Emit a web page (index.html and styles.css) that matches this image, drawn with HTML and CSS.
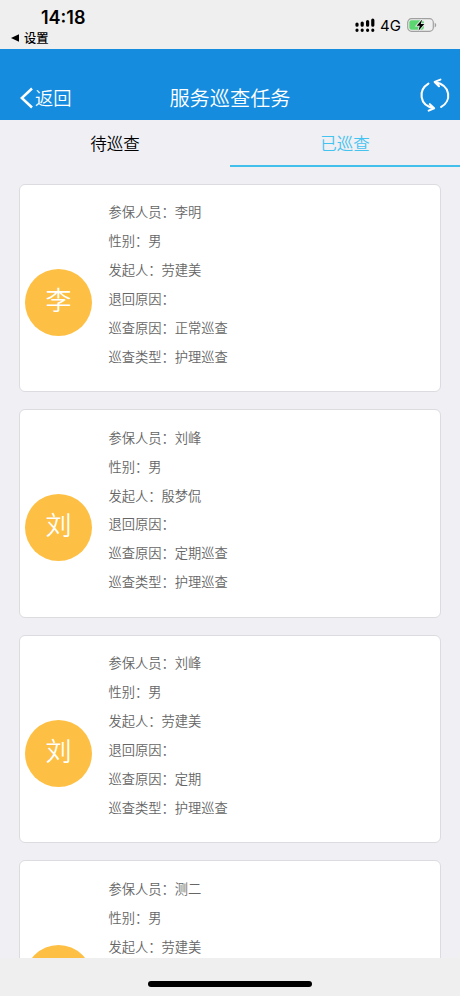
FILE: index.html
```html
<!DOCTYPE html>
<html lang="zh-CN">
<head>
<meta charset="utf-8">
<title>服务巡查任务</title>
<link rel="stylesheet" href="styles.css">
</head>
<body>
<div class="status">
  <div class="status-left">
    <div class="time">14:18</div>
    <div class="back-app"><svg width="8" height="8" viewBox="0 0 8 8"><path d="M0 4L8 .2V7.8Z"/></svg><span>设置</span></div>
  </div>
  <div class="status-right">
    <svg class="signal" width="20" height="15" viewBox="0 0 20 15">
      <g stroke="#000" stroke-width="3.2" stroke-linecap="round">
        <path d="M2 6v1.2M7.2 5v2.2M12.6 3.6v3.6M17.8 2v5.2M2 12.2v.1M7.2 12.2v.1M12.6 12.2v.1M17.8 12.2v.1"/>
      </g>
    </svg>
    <span class="network">4G</span>
    <svg class="battery" width="30" height="16" viewBox="0 0 30 16">
      <rect x=".7" y="1.7" width="25.6" height="12.6" rx="3.8" fill="none" stroke="#a0a0a0" stroke-width="1.2"/>
      <rect x="2.3" y="3.3" width="14.5" height="9.4" rx="2.2" fill="#5bd671"/>
      <path d="M27.7 5.8v4.6c2-.8 2-3.8 0-4.6z" fill="#a0a0a0"/>
      <path d="M15.2 2.4L9.6 8.7h3.2l-1.3 5 5.8-6.6h-3.5z" fill="#000" stroke="#efefef" stroke-width="1.6" paint-order="stroke"/>
    </svg>
  </div>
</div>
<header class="nav">
  <div class="nav-back"><svg width="14" height="22" viewBox="0 0 14 22"><path d="M12 1.5L1.8 11 12 20.5" fill="none" stroke="#fff" stroke-width="2.5"/></svg><span>返回</span></div>
  <h1>服务巡查任务</h1>
  <svg class="refresh" width="32" height="34" viewBox="0 0 32 34" fill="none" stroke="#fff" stroke-width="2.1" stroke-linecap="round" stroke-linejoin="round">
    <path d="M9.4 5.6C-.6 11.8-.4 27.4 14.8 30.1M10.8 26.2l4.3 4.1-5.4 2.3"/>
    <path d="M22.2 28.9C32.6 23.4 32.2 7.2 16.2 4.2M21.4 1.6l-5.7 2.3 4.3 4.3"/>
  </svg>
</header>
<nav class="tabs"><div class="tab">待巡查</div><div class="tab active">已巡查</div></nav>
<main class="list">
  <article class="card"><div class="avatar">李</div><div class="info"><p>参保人员：李明</p><p>性别：男</p><p>发起人：劳建美</p><p>退回原因：</p><p>巡查原因：正常巡查</p><p>巡查类型：护理巡查</p></div></article>
  <article class="card"><div class="avatar">刘</div><div class="info"><p>参保人员：刘峰</p><p>性别：男</p><p>发起人：殷梦侃</p><p>退回原因：</p><p>巡查原因：定期巡查</p><p>巡查类型：护理巡查</p></div></article>
  <article class="card"><div class="avatar">刘</div><div class="info"><p>参保人员：刘峰</p><p>性别：男</p><p>发起人：劳建美</p><p>退回原因：</p><p>巡查原因：定期</p><p>巡查类型：护理巡查</p></div></article>
  <article class="card"><div class="avatar"></div><div class="info"><p>参保人员：测二</p><p>性别：男</p><p>发起人：劳建美</p></div></article>
</main>
<footer class="home"><div class="home-bar"></div></footer>
</body>
</html>
```
FILE: styles.css
```css
* { box-sizing: border-box; margin: 0; padding: 0; }
body {
  width: 460px;
  height: 996px;
  overflow: hidden;
  display: flex;
  flex-direction: column;
  background: #efeff4;
  font-family: "Noto Sans CJK SC", sans-serif;
  font-weight: 350;
}
svg { display: block; flex: none; }
.status {
  height: 49px;
  flex: none;
  background: #efefef;
  color: #000;
  display: flex;
  justify-content: space-between;
}
.status-left { padding: 7px 0 0 11px; }
.time {
  padding-left: 30px;
  font: 600 18px/22px Inter, sans-serif;
}
.back-app {
  display: flex;
  align-items: center;
  gap: 5px;
  font-size: 12.3px;
  font-weight: 500;
  line-height: 18px;
}
.status-right {
  display: flex;
  align-items: center;
  height: 18px;
  margin: 16px 23px 0 0;
}
.network {
  margin: 1px 6px 0 5px;
  font: 400 15px/18px Inter, sans-serif;
}
.nav {
  height: 71px;
  flex: none;
  padding: 26px 9px 0 20px;
  background: #168cdf;
  color: #fff;
  display: grid;
  grid-template-columns: 100px 1fr 100px;
  align-items: center;
}
.nav-back { display: flex; align-items: center; gap: 1px; font-size: 18.3px; line-height: 26px; }
.nav-back span { margin-top: -2px; }
.nav h1 { font-size: 20.2px; font-weight: 350; line-height: 30px; padding-right: 11px; text-align: center; }
.refresh { justify-self: end; margin-top: -5px; }
.tabs { height: 47px; flex: none; display: flex; }
.tab {
  flex: 1;
  text-align: center;
  font-size: 16.5px;
  line-height: 46px;
  color: #000;
}
.tab.active { color: #43c3f0; border-bottom: 2px solid #43bfec; }
.list {
  height: 791px;
  flex: none;
  overflow: hidden;
  padding: 16.6px 19px 0;
}
.card {
  height: 208.6px;
  margin-bottom: 17px;
  border: 1px solid #dcdce0;
  border-radius: 6px;
  background: #fff;
  display: flex;
  align-items: flex-start;
}
.avatar {
  width: 67px;
  height: 67px;
  margin: 84px 16.5px 0 5px;
  border-radius: 50%;
  background: #fdc044;
  color: #fff;
  font-size: 26px;
  line-height: 60px;
  text-align: center;
}
.info {
  padding-top: 13.7px;
  color: #666;
  font-size: 13.27px;
  line-height: 28.85px;
}
.home {
  height: 38px;
  flex: none;
  background: #efefef;
  padding-top: 23px;
}
.home-bar { width: 164px; height: 6px; margin: 0 auto; border-radius: 3px; background: #000; }
```
